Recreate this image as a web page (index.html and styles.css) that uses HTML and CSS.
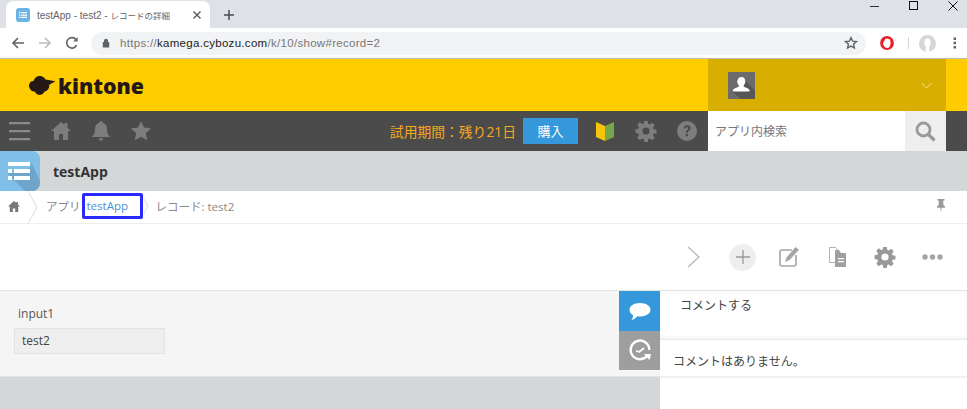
FILE: index.html
```html
<!DOCTYPE html>
<html lang="en">
<head>
    <meta charset="UTF-8">
    <title>testApp - test2 - レコードの詳細</title>
    <link rel="stylesheet" href="styles.css">
</head>
<body>
    <!-- browser chrome -->
    <div class="tabstrip">
        <div class="tab">
            <svg class="tab-favicon" width="14" height="14" viewBox="0 0 14 14"><rect width="14" height="14" rx="3" fill="#6db4e4"/><path d="M3 4h1.5v1.3H3zM5.3 4H11v1.3H5.3zM3 6.4h1.5v1.3H3zM5.3 6.4H11v1.3H5.3zM3 8.8h1.5v1.3H3zM5.3 8.8H11v1.3H5.3z" fill="#fff"/></svg>
            <span class="tab-title">testApp - test2 - <span class="tab-cjk">レコードの詳細</span></span>
            <svg class="tab-close" width="10" height="10" viewBox="0 0 10 10"><path d="M1.500 1.500l7 7M8.500 1.500l-7 7" stroke="#5f6368" stroke-width="1.500"/></svg>
        </div>
        <svg class="new-tab" width="10" height="10" viewBox="0 0 10 10"><path d="M5 0v10M0 5h10" stroke="#4a4d51" stroke-width="1.500"/></svg>
        <div class="window-controls">
            <svg width="10" height="10" viewBox="0 0 10 10"><path d="M0 5.500h9" stroke="#333"/></svg>
            <svg width="10" height="10" viewBox="0 0 10 10"><rect x=".5" y=".5" width="8" height="8" fill="none" stroke="#111"/></svg>
            <svg width="10" height="10" viewBox="0 0 10 10"><path d="M.5.5l9 9M9.500.5l-9 9" stroke="#111"/></svg>
        </div>
    </div>
    <div class="browserbar">
        <svg class="nav-arrow" width="14" height="14" viewBox="0 0 14 14"><path d="M13 7H2M7 2L2 7l5 5" fill="none" stroke="#5f6368" stroke-width="1.600"/></svg>
        <svg class="nav-arrow" width="14" height="14" viewBox="0 0 14 14"><path d="M1 7h11M7 2l5 5-5 5" fill="none" stroke="#b9bbbe" stroke-width="1.600"/></svg>
        <svg class="nav-arrow" width="14" height="14" viewBox="0 0 14 14"><path d="M11.600 9.200A5.200 5.200 0 1 1 11 3.600" fill="none" stroke="#5f6368" stroke-width="1.600"/><path d="M12.600 1v4.400H8.200z" fill="#5f6368"/></svg>
        <div class="omnibox">
            <svg width="8" height="10" viewBox="0 0 8 10"><path d="M2 4V2.800a2 2 0 0 1 4 0V4h1.200v5.500H.8V4z" fill="#5f6368"/></svg>
            <span class="url">https://<b>kamega.cybozu.com</b>/k/10/show#record=2</span>
            <svg class="omni-star" width="14" height="14" viewBox="0 0 14 14"><path d="M7 1.600l1.600 3.600 3.900.4-2.900 2.600.8 3.800L7 10.100l-3.400 1.900.8-3.800L1.500 5.600l3.900-.4z" fill="none" stroke="#5f6368" stroke-width="1.400"/></svg>
        </div>
        <svg class="opera" width="14" height="14" viewBox="0 0 14 14"><circle cx="7" cy="7" r="5.200" fill="none" stroke="#e8202a" stroke-width="3.400"/><path d="M5 3.500c0-1.200 1.500-1.500 1.800-.4.300-1 1.800-.8 1.800.4.600-.5 1.600-.2 1.600.7v4.500c0 2-1.300 3.300-3 3.300-1.500 0-2.500-.8-3.200-2L3 7.800c-.3-.9.700-1.300 1.300-.7L5 8z" fill="#fff"/></svg>
        <span class="bar-sep"></span>
        <svg class="profile" width="17" height="17" viewBox="0 0 16 16"><circle cx="8" cy="8" r="8" fill="#d5d7da"/><path d="M8 3.400c2 0 3 1.500 3 3.400 0 1.700-.7 3-1.300 3.800V16H6.300v-5.400C5.700 9.800 5 8.500 5 6.800c0-1.900 1-3.400 3-3.400z" fill="#fff"/></svg>
        <svg class="dots" width="4" height="12" viewBox="0 0 4 12"><path d="M.6.600H3V3H.6zM.6 4.800H3v2.400H.6zM.6 9H3v2.400H.6z" fill="#5f6368"/></svg>
    </div>

    <!-- kintone header -->
    <header class="header">
        <div class="logo">
            <svg width="27" height="20" viewBox="0 0 27 20"><path d="M0 10.500C0 7.800 2 6 4.500 6 5.500 2.500 8.500.6 11.500 1c2.500.3 4 1.700 5 3.500l10 1.800-6.300 3.400c.5 3.500-1.600 6.300-4.700 6.800-1 2.400-3.600 3.800-6 3.300-1.800-.4-3-1.500-3.500-3C2.800 16.600 0 14 0 10.500z" fill="#231815"/></svg>
            <span class="logo-text">kintone</span>
        </div>
        <div class="user-menu">
            <svg class="avatar" width="27" height="27" viewBox="0 0 27 27"><rect width="27" height="27" fill="#6b6b6b"/><path d="M16 7l11 12v8H13L5 20z" fill="#575757"/><path d="M13.500 5c2.500 0 3.800 2 3.800 4.300 0 1.700-.7 3-1.500 4-.4.600-.2 1.300.5 1.600 2 .8 4.500 1.600 5.200 3.100.3.700.2 1.500-.6 1.500H5.600c-.8 0-.9-.8-.6-1.500.7-1.500 3.200-2.300 5.200-3.100.7-.3.900-1 .5-1.600-.8-1-1.500-2.300-1.500-4C9.700 7 11 5 13.500 5z" fill="#fff"/></svg>
            <svg class="user-caret" width="11" height="7" viewBox="0 0 11 7"><path d="M.5 1l5 5 5-5" fill="none" stroke="#f4e4a0"/></svg>
        </div>
    </header>

    <nav class="navbar">
        <svg class="nav-menu" width="22" height="20" viewBox="0 0 22 20"><path d="M0 1h21v2.200H0zM0 9h21v2.200H0zM0 17h21v2.200H0z" fill="#8a8a8a"/></svg>
        <svg class="nav-icon" width="20" height="20" viewBox="0 0 20 20"><path d="M10 1L0 10h3v9h5v-6h4v6h5v-9h3l-3.500-3.200V2h-3v2z" fill="#7d7d7d"/></svg>
        <svg class="nav-icon" width="20" height="20" viewBox="0 0 20 20"><path d="M10 0c1 0 1.500.7 1.500 1.500C14.500 2.300 16 5 16 8c0 4 1 6 3.500 8H.5C3 14 4 12 4 8c0-3 1.500-5.700 4.500-6.500C8.500.7 9 0 10 0zM7.800 17.200h4.400c0 1.400-1 2.400-2.200 2.400s-2.200-1-2.200-2.400z" fill="#7d7d7d"/></svg>
        <svg class="nav-icon" width="20" height="20" viewBox="0 0 20 20"><path d="M10 0l3 6.600 7 .8-5.200 4.800 1.400 7.100L10 15.800l-6.200 3.500 1.400-7.100L0 7.400l7-.8z" fill="#7d7d7d"/></svg>
        <div class="trial">
            <span class="trial-text">試用期間：残り21日</span>
            <span class="buy">購入</span>
        </div>
        <svg class="nav-beginner" width="18" height="20" viewBox="0 0 18 20"><path d="M0 1l9 4v15l-9-4z" fill="#f5c60c"/><path d="M18 1L9 5v15l9-4z" fill="#74a84a"/></svg>
        <svg class="nav-gear" width="20" height="20" viewBox="0 0 20 20"><path fill-rule="evenodd" d="M8.200 0h3.600l.5 2.900 1.500.6 2.400-1.700 2.500 2.500-1.700 2.400.6 1.500 2.900.5v3.600l-2.900.5-.6 1.500 1.700 2.400-2.500 2.500-2.400-1.700-1.500.6-.5 2.900H8.200l-.5-2.900-1.500-.6-2.400 1.700-2.500-2.500 1.700-2.400-.6-1.500L-.5 11.800V8.200l2.900-.5.6-1.500-1.700-2.400 2.500-2.500 2.400 1.700 1.500-.6zM10 6.400a3.600 3.600 0 1 0 0 7.200 3.600 3.600 0 0 0 0-7.200z" fill="#7d7d7d"/></svg>
        <svg class="nav-help" width="20" height="20" viewBox="0 0 20 20"><circle cx="10" cy="10" r="10" fill="#7d7d7d"/><path d="M6.600 7.600C6.700 5.300 8.200 4.200 10.100 4.200c2 0 3.500 1.200 3.500 3 0 1.400-.8 2.100-1.700 2.800-.8.600-1 .9-1 1.800H8.900c0-1.500.4-2.100 1.300-2.800.7-.6 1.100-.9 1.100-1.600 0-.7-.5-1.200-1.300-1.200-.9 0-1.400.6-1.400 1.400zM8.800 13H11v2.300H8.800z" fill="#4b4b4b"/></svg>
        <div class="search">
            <span class="search-text">アプリ内検索</span>
            <div class="search-btn">
                <svg width="21" height="21" viewBox="0 0 21 21"><circle cx="8.500" cy="8.500" r="6.500" fill="none" stroke="#9a9a9a" stroke-width="2.800"/><path d="M13.500 13.500l6 6" stroke="#9a9a9a" stroke-width="3.200"/></svg>
            </div>
        </div>
    </nav>

    <div class="appbar">
        <svg class="app-icon" width="40" height="40" viewBox="0 0 40 40"><path d="M0 0h32a8 8 0 0 1 8 8v24a8 8 0 0 1-8 8H0z" fill="#7fbfe8"/><path d="M7 22l18 18h7a8 8 0 0 0 8-8v-2L31 11v4L24 22z" fill="#6fa5ca"/><path d="M8 11h22v4H8zM8 18h4v4H8zM14 18h16v4H14zM8 25h4v4H8zM14 25h16v4H14z" fill="#fff"/></svg>
        <span class="app-name">testApp</span>
    </div>

    <div class="crumbs">
        <svg class="crumb-home" width="14" height="13" viewBox="0 0 14 13"><path d="M7 1L1 6.500h1.800V12h3V8.500h2.400V12h3V6.500H13l-2-1.900V2H9.400v1.100z" fill="#777"/></svg>
        <svg class="crumb-sep" width="10" height="33" viewBox="0 0 10 33"><path d="M0 0l9 16.500L0 33" fill="none" stroke="#ddd"/></svg>
        <span class="crumb-text crumb-app">アプリ</span>
        <a class="crumb-link">testApp</a>
        <svg class="crumb-sep2" width="5" height="14" viewBox="0 0 5 14"><path d="M0 0l4 7-4 7" fill="none" stroke="#ddd"/></svg>
        <span class="crumb-text">レコード: test2</span>
        <svg class="crumb-pin" width="10" height="14" viewBox="0 0 10 14"><path d="M1.500 0h7v1.500H7.300v4.200L9 7.500v1.200H5.600L5 14l-.6-5.300H1V7.500l1.700-1.800V1.500H1.500z" fill="#999"/></svg>
    </div>

    <div class="toolbar">
        <svg class="tool-next" width="13" height="22" viewBox="0 0 13 22"><path d="M1 1l11 10L1 21" fill="none" stroke="#b5b5b5" stroke-width="1.200"/></svg>
        <div class="tool-add">
            <svg width="14" height="14" viewBox="0 0 14 14"><path d="M7 0v14M0 7h14" stroke="#9a9a9a" stroke-width="1.300"/></svg>
        </div>
        <svg class="tool-edit" width="20" height="20" viewBox="0 0 20 20"><path d="M13 3H3a2 2 0 0 0-2 2v12a2 2 0 0 0 2 2h12a2 2 0 0 0 2-2V8" fill="none" stroke="#a5a5a5" stroke-width="1.600"/><path d="M16.500 0L20 2.800 10.500 13l-4.500 2 1.500-4.500z" fill="#a5a5a5"/></svg>
        <svg class="tool-copy" width="18" height="20" viewBox="0 0 18 20"><path d="M.5.500h6l3 3v12h-9z" fill="#fff" stroke="#b0b0b0"/><path d="M6 3h4l2 3h5v14H6z" fill="#9f9f9f"/><path d="M9 11h6v1.300H9zM9 14h6v1.300H9z" fill="#fff"/></svg>
        <svg class="tool-gear" width="20" height="20" viewBox="0 0 20 20"><path fill-rule="evenodd" d="M8.200 0h3.600l.5 2.900 1.500.6 2.400-1.700 2.500 2.500-1.700 2.400.6 1.500 2.900.5v3.600l-2.900.5-.6 1.500 1.700 2.400-2.500 2.500-2.400-1.700-1.500.6-.5 2.900H8.200l-.5-2.900-1.500-.6-2.400 1.700-2.500-2.500 1.700-2.400-.6-1.500L-.5 11.800V8.200l2.900-.5.6-1.500-1.700-2.400 2.500-2.500 2.400 1.700 1.500-.6zM10 6.400a3.600 3.600 0 1 0 0 7.200 3.600 3.600 0 0 0 0-7.200z" fill="#999"/></svg>
        <svg class="tool-more" width="21" height="6" viewBox="0 0 21 6"><circle cx="3" cy="3" r="2.700" fill="#a5a5a5"/><circle cx="10.500" cy="3" r="2.700" fill="#a5a5a5"/><circle cx="18" cy="3" r="2.700" fill="#a5a5a5"/></svg>
    </div>

    <main class="content">
        <div class="left">
            <div class="record">
                <div class="fields">
                    <div class="field-label">input1</div>
                    <div class="field-value">test2</div>
                </div>
                <div class="side-tabs">
                    <div class="side-tab side-tab-comment">
                        <svg width="22" height="19" viewBox="0 0 22 19"><path d="M11 1c5.800 0 10.500 2.900 10.500 6.700S16.800 14.400 11 14.400c-1 0-1.900-.1-2.800-.2C7 15.800 5 17.300 2.500 18c1-1.200 1.600-2.700 1.500-4.700C2 12 .5 10 .5 7.700.5 3.900 5.200 1 11 1z" fill="#fff"/></svg>
                    </div>
                    <div class="side-tab side-tab-history">
                        <svg width="22" height="22" viewBox="0 0 22 22"><path d="M18.200 15.800A9.300 9.300 0 1 1 20.300 10" fill="none" stroke="#fff" stroke-width="2.400"/><path d="M10 12l5-4" stroke="#fff" stroke-width="1.800"/><path d="M7 11l4 1" stroke="#fff" stroke-width="1.400"/><path d="M15 14h7l-1.500 6z" fill="#fff"/></svg>
                    </div>
                </div>
            </div>
        </div>
        <aside class="comments">
            <div class="comment-form">コメントする</div>
            <div class="comment-empty">コメントはありません。</div>
        </aside>
    </main>
</body>
</html>
```

FILE: styles.css
```css
html, body {
    margin: 0;
    height: 409px;
    overflow: hidden;
}
body {
    font-family: "Open Sans", "Noto Sans CJK JP", sans-serif;
    font-size: 12px;
    color: #333;
    background-color: #fff;
}
svg {
    display: block;
    flex: none;
    overflow: visible;
}

/* browser chrome */
.tabstrip {
    height: 28px;
    background-color: #dee1e6;
    display: flex;
    align-items: flex-end;
    padding-left: 6px;
}
.tab {
    width: 204px;
    height: 27px;
    background-color: #fff;
    border-radius: 7px 7px 0 0;
    display: flex;
    align-items: center;
    box-sizing: border-box;
    padding: 0 8px 0 10px;
}
.tab-title {
    flex: 1;
    margin-left: 7px;
    font-size: 10px;
    color: #5f6368;
    white-space: nowrap;
    font-family: "Liberation Sans", "Noto Sans CJK JP", sans-serif;
}
.tab-cjk {
    font-size: 8.5px;
}
.new-tab {
    margin: 0 0 8px 14px;
}
.window-controls {
    margin-left: auto;
    align-self: flex-start;
    display: flex;
    gap: 29px;
    padding: 1px 9px 0 0;
}
.browserbar {
    height: 30px;
    border-bottom: 1px solid #b9bbbe;
    display: flex;
    align-items: center;
    padding-left: 11px;
}
.nav-arrow {
    margin-right: 13px;
}
.omnibox {
    width: 775px;
    height: 23px;
    box-sizing: border-box;
    margin-left: -1px;
    padding: 0 8px 0 11px;
    border-radius: 12px;
    background-color: #f1f3f4;
    display: flex;
    align-items: center;
}
.url {
    flex: 1;
    margin-left: 10px;
    font-size: 11.5px;
    color: #777;
    font-family: "Liberation Sans", sans-serif;
    letter-spacing: .3px;
}
.url b {
    font-weight: normal;
    color: #222;
}
.opera {
    margin-left: 14px;
}
.bar-sep {
    width: 1px;
    height: 12px;
    margin: 0 10px 0 14px;
    background-color: #d5d7da;
}
.dots {
    margin-left: 17px;
}

/* kintone header */
.header {
    height: 52px;
    background-color: #ffcc00;
    display: flex;
    justify-content: space-between;
    padding: 0 21px 0 29px;
}
.logo {
    display: flex;
    align-items: center;
    gap: 2px;
}
.logo-text {
    font-size: 21.3px;
    font-weight: 800;
    color: #231815;
    font-family: "Open Sans", sans-serif;
}
.user-menu {
    width: 238px;
    background-color: #d8ae00;
    display: flex;
    align-items: center;
    justify-content: space-between;
    box-sizing: border-box;
    padding: 0 14px 0 20px;
}

.navbar {
    height: 40px;
    background-color: #4b4b4b;
    display: flex;
    align-items: center;
    padding: 0 21px 0 9px;
}
.nav-icon {
    margin-left: 20px;
}
.trial {
    margin-left: auto;
    display: flex;
    align-items: center;
    gap: 7px;
}
.trial-text {
    font-size: 13.8px;
    color: #f5a81c;
}
.buy {
    width: 55px;
    height: 26px;
    background-color: #3498db;
    color: #fff;
    font-size: 13px;
    text-align: center;
    line-height: 26px;
}
.nav-beginner {
    margin-left: 18px;
}
.nav-gear {
    margin-left: 22px;
}
.nav-help {
    margin-left: 21px;
}
.search {
    width: 238px;
    height: 40px;
    margin-left: 11px;
    background-color: #fff;
    display: flex;
    align-items: center;
}
.search-text {
    flex: 1;
    padding-left: 7px;
    color: #777;
    font-size: 12px;
}
.search-btn {
    width: 41px;
    height: 40px;
    background-color: #eee;
    display: flex;
    align-items: center;
    justify-content: center;
}

.appbar {
    height: 40px;
    background-color: #d4d7d7;
    display: flex;
    align-items: center;
}
.app-name {
    margin-left: 13px;
    font-size: 14px;
    font-weight: 700;
    color: #333;
}

.crumbs {
    height: 33px;
    box-sizing: border-box;
    border-bottom: 1px solid #eee;
    display: flex;
    align-items: center;
    padding: 0 21px 2px 7px;
    color: #888;
}
.crumb-sep {
    align-self: flex-start;
    margin-left: 7px;
}
.crumb-text {
    font-size: 11.5px;
}
.crumb-app {
    margin-left: 8px;
}
.crumb-link {
    width: 61px;
    height: 26px;
    box-sizing: border-box;
    margin-left: 1px;
    padding-left: 2px;
    border: 3px solid #2a2aff;
    border-radius: 2px;
    color: #4a8fd8;
    font-size: 11.5px;
    line-height: 20px;
}
.crumb-sep2 {
    margin: 0 7px 0 1px;
}
.crumb-pin {
    margin-left: auto;
}

.toolbar {
    height: 67px;
    box-sizing: border-box;
    padding-right: 24px;
    border-bottom: 1px solid #e3e3e3;
    display: flex;
    align-items: center;
    justify-content: flex-end;
}
.tool-add {
    width: 27px;
    height: 27px;
    margin-left: 29px;
    border-radius: 50%;
    background-color: #eee;
    display: flex;
    align-items: center;
    justify-content: center;
}
.tool-edit {
    margin-left: 23px;
}
.tool-copy {
    margin-left: 30px;
}
.tool-gear {
    margin-left: 28px;
}
.tool-more {
    margin-left: 27px;
}

/* record and comments */
.content {
    height: 118px;
    display: flex;
}
.left {
    width: 660px;
    background-color: #d4d7d7;
}
.record {
    height: 86px;
    box-sizing: border-box;
    background-color: #f5f5f5;
    border-bottom: 1px solid #e3e3e3;
    display: flex;
}
.fields {
    flex: 1;
    padding: 14px 0 0 14px;
}
.field-label {
    padding-left: 4px;
    color: #555;
}
.field-value {
    width: 151px;
    height: 26px;
    margin-top: 6px;
    box-sizing: border-box;
    padding-left: 7px;
    border: 1px solid #e3e3e3;
    background-color: #eee;
    line-height: 24px;
    color: #444;
}
.side-tabs {
    width: 41px;
    height: 79px;
}
.side-tab {
    height: 40px;
    display: flex;
    align-items: center;
    justify-content: center;
}
.side-tab-comment {
    background-color: #3498db;
}
.side-tab-history {
    height: 39px;
    background-color: #9e9e9e;
}
.comments {
    flex: 1;
}
.comment-form {
    height: 49px;
    padding: 5px 0 0 20px;
    box-sizing: border-box;
    border-bottom: 1px solid #e8eaea;
    box-shadow: inset 0 -3px 3px -2px #eef0f0, inset 0 0 6px #f6f6f6;
    font-size: 12px;
    color: #444;
}
.comment-empty {
    height: 38px;
    box-sizing: border-box;
    padding: 12px 0 0 13px;
    border-bottom: 2px solid #f0f0f0;
    font-size: 12px;
    color: #444;
}
```
